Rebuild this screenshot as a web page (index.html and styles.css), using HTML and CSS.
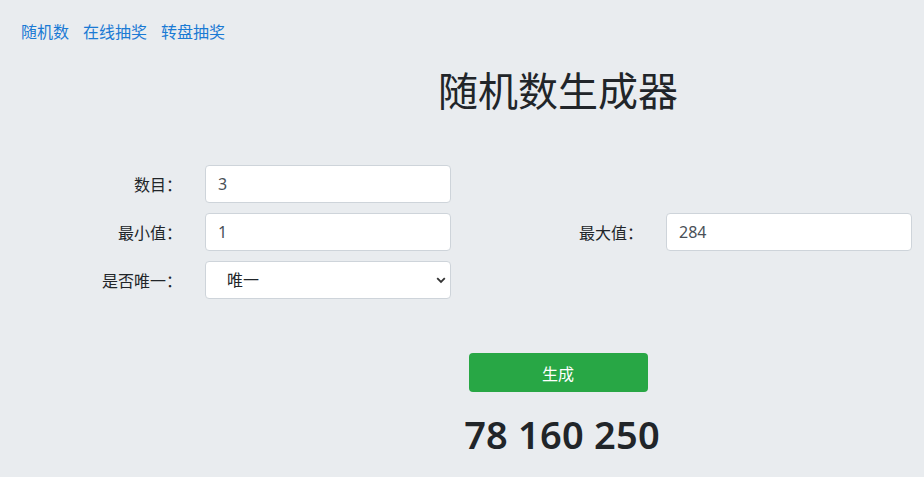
FILE: index.html
```html
<!DOCTYPE html>
<html lang="zh-CN">
<head>
<meta charset="utf-8">
<title>随机数生成器</title>
<link rel="stylesheet" href="styles.css">
</head>
<body>
<nav class="nav">
  <a href="#">随机数</a>
  <a href="#">在线抽奖</a>
  <a href="#">转盘抽奖</a>
</nav>
<h1 class="title">随机数生成器</h1>
<form class="form">
  <div class="half">
    <label class="label">数目：</label>
    <input class="control" type="text" value="3">
  </div>
  <div class="half"></div>
  <div class="half">
    <label class="label">最小值：</label>
    <input class="control" type="text" value="1">
  </div>
  <div class="half">
    <label class="label">最大值：</label>
    <input class="control" type="text" value="284">
  </div>
  <div class="half">
    <label class="label">是否唯一：</label>
    <div class="select-wrap">
      <select class="control select">
        <option>唯一</option>
        <option>不唯一</option>
      </select>
      <svg class="chev" width="10" height="7" viewBox="0 0 10 7"><path d="M1.2 1.2 L5 5 L8.8 1.2" fill="none" stroke="#333" stroke-width="1.8"/></svg>
    </div>
  </div>
  <div class="half"></div>
</form>
<div class="actions">
  <button class="btn" type="button">生成</button>
</div>
<div class="result">78 160 250</div>
</body>
</html>
```
FILE: styles.css
```css
* { box-sizing: border-box; }
body {
  margin: 0;
  background: #e9ecef;
  color: #212529;
  font-family: "Noto Sans", "Noto Sans CJK SC", sans-serif;
  font-size: 16px;
}
.nav {
  display: flex;
  gap: 14px;
  padding: 19px 21px 0;
  line-height: 24px;
}
.nav a {
  color: #1a7ad4;
  text-decoration: none;
  font-family: "Noto Sans CJK SC", sans-serif;
}
.title {
  margin: 22px 0 0;
  padding-left: 192px;
  text-align: center;
  font-family: "Noto Sans CJK SC", sans-serif;
  font-size: 40px;
  font-weight: 400;
  line-height: 48px;
}
.form {
  display: grid;
  grid-template-columns: 461px 463px;
  row-gap: 10px;
  margin-top: 52px;
}
.half {
  display: grid;
  grid-template-columns: 182px 246px;
  column-gap: 23px;
  align-items: center;
  min-height: 38px;
}
.label {
  text-align: right;
  font-family: "Noto Sans CJK SC", sans-serif;
}
.control {
  width: 246px;
  height: 38px;
  padding: 6px 12px;
  border: 1px solid #ced4da;
  border-radius: 4px;
  background: #fff;
  color: #495057;
  font-family: "Noto Sans", "Noto Sans CJK SC", sans-serif;
  font-size: 16px;
}
.select-wrap { position: relative; width: 246px; }
.select {
  -webkit-appearance: none;
  appearance: none;
  padding-left: 21px;
  color: #212529;
}
.chev {
  position: absolute;
  right: 5px;
  top: 16px;
  pointer-events: none;
}
.actions {
  padding-left: 192px;
  display: flex;
  justify-content: center;
  margin-top: 54px;
}
.btn {
  width: 179px;
  height: 39px;
  border: none;
  border-radius: 4px;
  background: #28a745;
  color: #fff;
  font-family: "Noto Sans CJK SC", sans-serif;
  font-size: 16px;
}
.result {
  padding-left: 200px;
  text-align: center;
  margin-top: 20px;
  font-size: 38px;
  font-weight: 600;
  letter-spacing: 0.2px;
  line-height: 1.2;
  color: #212529;
}
```
